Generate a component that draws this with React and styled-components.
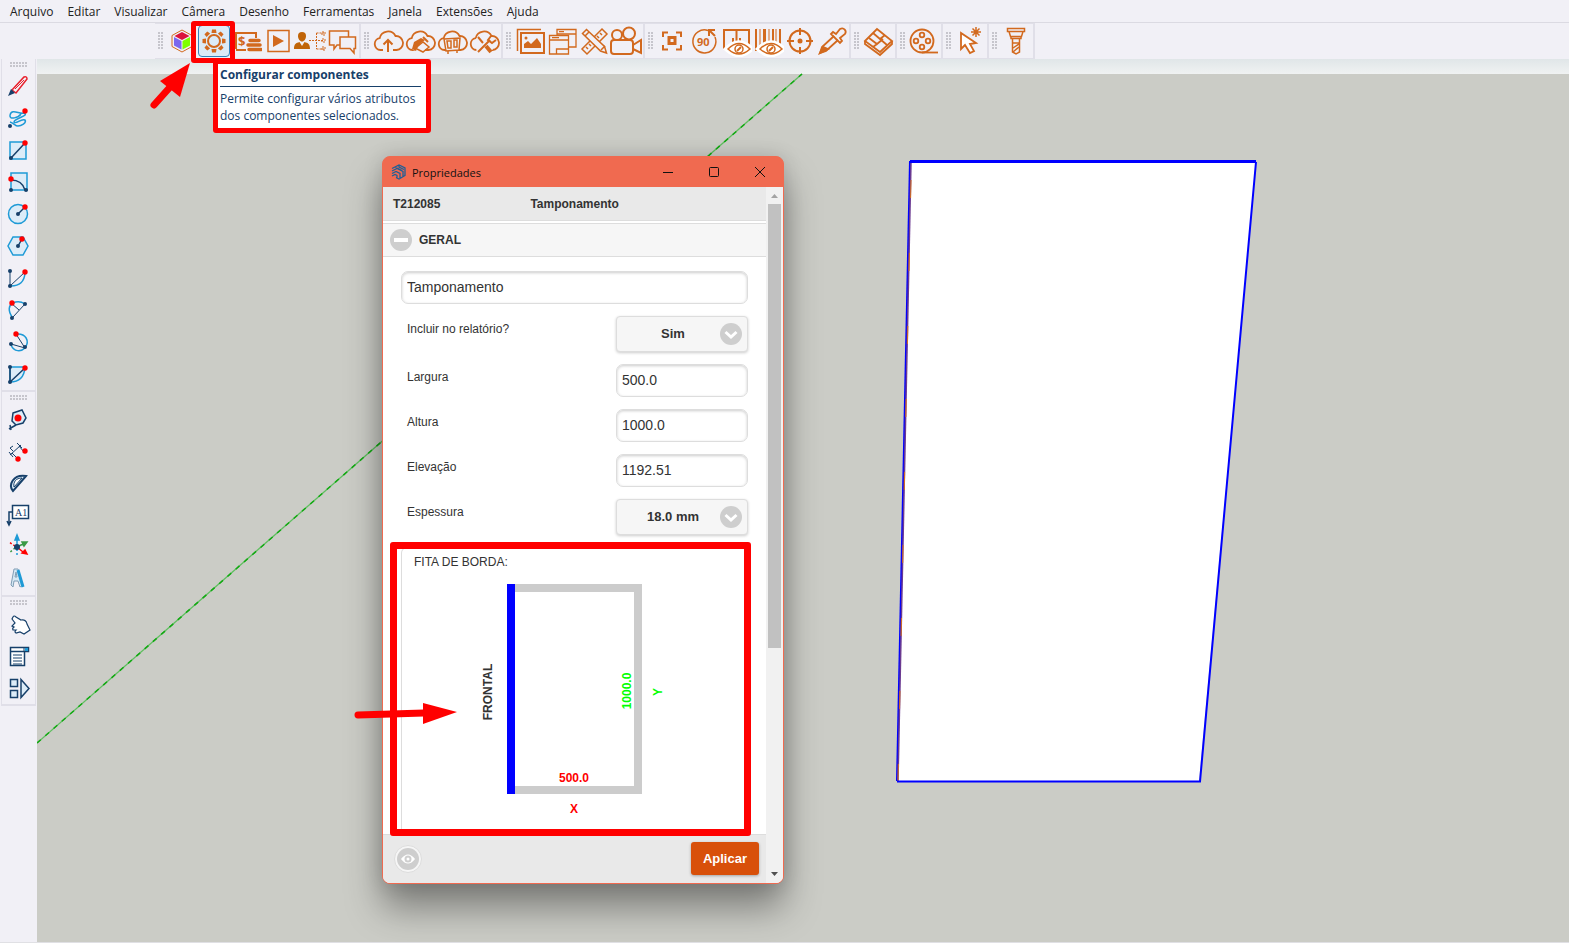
import React from 'react'
import styled, { createGlobalStyle } from 'styled-components';

const orange = '#d2691e';
const navy = '#17406a';
const blue = '#1e9ad6';
const pale = '#dcecf8';
const chrome = '#f1f0f6';


// ---- icons, all on a 32 x 32 grid ----

const Cloud = () => (
    <path d="M11 25H8.500a6 6 0 0 1-.8-11.900A8.500 8.500 0 0 1 23.500 11a7 7 0 0 1 1 14H21" strokeWidth="1.800" />
)

const Eye = () => (
    <g>
        <path d="M4 24q15-16 30 0q-15 15-30 0z" fill="#fff" stroke="#fff" />
        <path d="M8 24q11-11 22 0q-11 10-22 0z" fill="#fff" />
        <circle cx="19" cy="24" r="4" />
        <path d="M17 26l4-4" strokeWidth="2" />
    </g>
)

const topIcons = {
    cube: (
        <g strokeWidth="1">
            <path d="M16 5l10 5.500v11L16 27 6 21.500v-11z" />
            <path d="M16 7l7.500 4-7.500 4-7.500-4z" fill="#dc143c" stroke="none" />
            <path d="M8 12l7.500 4v8.500L8 20.500z" fill="#7b68ee" stroke="none" />
            <path d="M24 12l-7.500 4v8.500l7.500-4z" fill="#7fff00" stroke="none" />
        </g>
    ),
    gear: (
        <g>
            <circle cx="16" cy="16" r="6" strokeWidth="2" />
            {[0, 45, 90, 135, 180, 225, 270, 315].map((a) => (
                <path key={a} d="M14 4.500h4l.5 3.500h-5z" fill={orange} stroke="none" transform={`rotate(${a} 16 16)`} />
            ))}
        </g>
    ),
    budget: (
        <g>
            <path d="M4 8h22v5M6 8v16M6 25h10" strokeWidth="2" />
            <text x="8" y="21" fontSize="13" fontWeight="700" fill={orange} stroke="none">$</text>
            <path d="M20 15.500h9M18 20h12M19 24.500h12" strokeWidth="3.500" strokeLinecap="round" />
        </g>
    ),
    play: (
        <g>
            <rect x="6" y="5.500" width="21" height="21" />
            <path d="M11 10v12l11-6z" fill={orange} stroke="none" />
        </g>
    ),
    hierarchy: (
        <g>
            <g fill="#c06408" stroke="none">
                <path d="M8 7a4 4 0 0 1 4 4c0 3-2 5.500-4 5.500S4 14 4 11a4 4 0 0 1 4-4z" />
                <path d="M0 24c0-5 2-6 5.500-7L8 21l2.500-4c3.500 1 5.500 2 5.500 7z" />
            </g>
            <path d="M15 15.500h15M22.500 8v16M22.500 8H30M22.500 24H30" strokeDasharray="2 1" strokeWidth="1" />
            <path d="M28 7h3v3h-3zM28 14h3v3h-3zM28 22h3v3h-3z" strokeWidth="1" strokeDasharray="2 1" />
        </g>
    ),
    chat: (
        <g>
            <path d="M14 20h-3l-3 4v-4H3.500V6h19v6" />
            <path d="M14 12h15.500v11.500H28V28l-4-4.500H14z" />
        </g>
    ),
    cloudUp: <g><Cloud /><path d="M16 27V15M11.500 19.500L16 15l4.500 4.500" strokeWidth="2" /></g>,
    cloudHands: (
        <g>
            <Cloud />
            <path d="M6 18l10-6 9 7-7 9-9-3z" fill={chrome} stroke="none" />
            <path d="M8 24l2-7 7-4 4 2-4 3-3 4-2 4z" fill={orange} stroke="none" />
            <path d="M14 21l5-4 6 5-6 5-6-3" />
            <path d="M19 12l5 5" strokeWidth="2" />
        </g>
    ),
    cloudBoxes: (
        <g>
            <Cloud />
            <path d="M8 14l16-1-1 12-13 1z" fill={chrome} />
            <path d="M11 16h4v7h-3zM18 15h3v7h-3zM12 26v3M21 25v3" />
        </g>
    ),
    cloudTools: (
        <g>
            <Cloud />
            <path d="M10 12l13 14M23 14L10 27" stroke={chrome} strokeWidth="6" />
            <path d="M10 12l5 6M22 15L10 27" strokeWidth="2" />
            <path d="M18 21l5 6" strokeWidth="4" />
            <path d="M23 11l-3 4 4 3 4-3" strokeWidth="2" />
        </g>
    ),
    pictures: (
        <g>
            <path d="M3.500 26V4.500H27" />
            <rect x="7" y="8" width="23" height="20" strokeWidth="2" />
            <path d="M10 23v-4l4-3 3 3 6-6 4 6v4z" fill={orange} stroke="none" />
            <circle cx="12" cy="13" r="1.500" fill={orange} stroke="none" />
        </g>
    ),
    windows: (
        <g strokeWidth="1.300">
            <path d="M11 4.500h19V22H11zM11 9h19M13 6.700h5" />
            <path d="M3.500 10.500h19v18.500h-19z" fill={chrome} />
            <path d="M3.500 15h19M6 12.700h7M10.500 29v-5h12" />
        </g>
    ),
    rulers: (
        <g>
            <path d="M24 4l5 5L9 29l-5-5z" />
            <path d="M22 8l2 2M19 11l2 2M11 19l2 2M8 22l2 2" />
            <path d="M4.500 8.500l4-4 18 17 2 6.500-6-2z" fill={chrome} />
            <path d="M11 7l-4 4M23 25l4-4" />
        </g>
    ),
    camera: (
        <g strokeWidth="2">
            <circle cx="7" cy="10" r="5" />
            <circle cx="19" cy="8.500" r="6" />
            <rect x="1" y="15" width="22" height="14" rx="3" />
            <path d="M23 20l8-5v13l-8-4" />
        </g>
    ),
    focus: (
        <g strokeWidth="2">
            <path d="M7 12V7.500h5M20 7.500h5V12M25 20v4.500h-5M12 24.500H7V20" />
            <rect x="13" y="12.500" width="6" height="6" strokeWidth="3" />
        </g>
    ),
    rotate: (
        <g>
            <path d="M20 5.500A11.500 11.500 0 1 0 27 12" />
            <path d="M27 5h-6v6M21 5l6 6" strokeWidth="2" />
            <text x="9" y="21" fontSize="11" fontWeight="700" fill={orange} stroke="none">90</text>
        </g>
    ),
    hideDoors: (
        <g>
            <path d="M4 24V5h25v15M16.500 5v13M4 24h5M13 13v6M20 13v4" strokeWidth="2" />
            <Eye />
        </g>
    ),
    barcode: (
        <g>
            <path d="M4 4v22M21 4v14M28 4v16" strokeWidth="2" />
            <path d="M8 4v20M17 4v14M24 4v14" strokeWidth="1" />
            <path d="M12.500 4v18" strokeWidth="3" />
            <Eye />
        </g>
    ),
    target: (
        <g strokeWidth="2">
            <circle cx="16" cy="16" r="10.500" />
            <circle cx="16" cy="16" r="2.500" fill={orange} stroke="none" />
            <path d="M16 3v7M16 22v7M3 16h7M22 16h7" />
        </g>
    ),
    pipette: (
        <g strokeWidth="1.800">
            <path d="M18 11L6 22l-2 6 6-2 12-11" />
            <path d="M4 28l3-6 5 2z" fill={orange} />
            <path d="M15 9l2-2 3 2 4-5c4-2 7 2 5 5l-5 4 2 3-2 2z" />
        </g>
    ),
    boards: (
        <g strokeWidth="1.800">
            <path d="M15 4l15 12-12 11L3 16z" />
            <path d="M3 16v3l15 11 12-11v-3" />
            <path d="M11 8l14 12M18 14l5-4M7 13l8 6 6-5M15 19l-4 3" />
        </g>
    ),
    reel: (
        <g strokeWidth="1.800">
            <circle cx="14" cy="16" r="11.500" />
            <circle cx="14" cy="10" r="2.300" />
            <circle cx="14" cy="22" r="2.300" />
            <circle cx="8" cy="16" r="2.300" />
            <circle cx="20" cy="16" r="2.300" />
            <path d="M14 27.500h16" />
        </g>
    ),
    pointer: (
        <g strokeWidth="1.800">
            <path d="M7 8v16l4-4 5 8 4-2-4-7 6-1z" fill="#fff" />
            <path d="M22 2v10M17 7h10M18.500 3.500l7 7M25.500 3.500l-7 7" strokeWidth="1.500" />
        </g>
    ),
    screw: (
        <g>
            <path d="M7.500 3.500h17v3h-17zM9 6.500l1.500 5h11l1.500-5M11 11.500v2h10v-2M12.500 13.500v13.500l3.500 2 3.500-2V13.500" />
            <path d="M12.500 18h7M13 23l6-4M13 27l6-5" />
        </g>
    ),
};

const toolGroups = [
    ['cube', 'gear', 'budget', 'play', 'hierarchy', 'chat'],
    ['cloudUp', 'cloudHands', 'cloudBoxes', 'cloudTools'],
    ['pictures', 'windows', 'rulers', 'camera'],
    ['focus', 'rotate', 'hideDoors', 'barcode', 'target', 'pipette'],
    ['boards'],
    ['reel'],
    ['pointer'],
    ['screw'],
];

const Dot = ({x, y, red}) => (
    <circle cx={x} cy={y} r={red ? 2.7 : 2} fill={red ? '#f00' : navy} stroke="none" />
)

const sideIcons = {
    pencil: (
        <g>
            <path d="M10 20L22 7q3-1 3 2L14 23z" stroke="#e8202c" />
            <path d="M13 19l9-9" stroke="#e8202c" strokeWidth="1" />
            <path d="M6 26l3-7 4 4z" fill={navy} stroke="none" />
        </g>
    ),
    freehand: <g><path d="M8 13c2-7 10 0 14-2M8 13c-1 6 9 2 11-1M22 11c6 3-10 5-10 9c2 3 7-4 11-2c2 3-4 6-7 6s-4-3-8-4" /><Dot x={8} y={24} /><Dot x={23} y={9} red /></g>,
    rect: <g><rect x="8" y="8" width="16" height="17" fill={pale} /><path d="M9 24L23 9" stroke={navy} /><Dot x={9} y={24} /><Dot x={23} y={9} red /></g>,
    rotRect: <g><rect x="9" y="7" width="16" height="17" fill={pale} /><path d="M9 14q11 0 14 10" stroke={navy} /><Dot x={9} y={24} /><Dot x={24} y={24} /><Dot x={9} y={13} red /></g>,
    circle: <g><circle cx="16" cy="16" r="9.500" fill={pale} /><path d="M16 16l7-7" stroke={navy} /><Dot x={16} y={16} /><Dot x={23} y={9} red /></g>,
    polygon: <g><path d="M11 7h10l5 9-5 9H11l-5-9z" fill={pale} /><path d="M16 16l4-7" stroke={navy} /><Dot x={16} y={16} /><Dot x={20} y={9} red /></g>,
    arc: <g><path d="M23 11q-1 13-14 13" /><path d="M8 9v15L23 10" stroke={navy} strokeWidth="1" /><Dot x={8} y={9} /><Dot x={8} y={24} /><Dot x={23} y={10} red /></g>,
    arc2: <g><path d="M10 23q-6-10 1-14q6-3 12 1" /><path d="M11 23L23 10M9 9l8 7" stroke={navy} strokeWidth="1" /><Dot x={10} y={24} /><Dot x={23} y={10} /><Dot x={10} y={9} red /></g>,
    arc3: <g><path d="M14 8c10-1 14 7 9 14c-4 4-11 4-14-3" /><path d="M14 8l9 14-14-4" stroke={navy} strokeWidth="1" /><Dot x={9} y={18} /><Dot x={23} y={21} /><Dot x={14} y={8} red /></g>,
    pie: <g><path d="M8 9h15q-1 15-15 15z" fill={pale} /><path d="M8 9v15L23 10" stroke={navy} /><Dot x={8} y={9} /><Dot x={8} y={24} /><Dot x={23} y={10} red /></g>,
    tape: <g><path d="M11 10l9-3 4 8-3 5-7 2-4-4zM14 22l-7 4M8 22l1 5" fill={pale} stroke={navy} /><circle cx="16" cy="15" r="3.500" fill="#f00" stroke="none" /></g>,
    dimension: <g><path d="M8 20L19 10M7 17l4 5M15 8l5 5M11 11l-3 2 3 3M15 23l-5-5M22 17l-5-6" stroke={navy} strokeWidth="1" /><Dot x={23} y={16} red /><Dot x={16} y={24} red /></g>,
    protractor: <g><path d="M24 9l-13 15c-5-6 0-17 13-15z" fill={pale} stroke={navy} strokeWidth="2" /><path d="M20 11l-8 9c-1-5 2-9 8-9z" fill="#fff" stroke={navy} strokeWidth="1" /></g>,
    label: <g stroke={navy}><rect x="10.500" y="6.500" width="16" height="13" fill="#fff" /><path d="M10 13H7v12M5 22l2 4 2-4" /><text x="13" y="17" fontSize="10" fontFamily="Liberation Serif, serif" fill={navy} stroke="none">A1</text></g>,
    axes: <g><path d="M15 16V8M13 9l2-5 2 5z" fill={blue} /><path d="M15 16l6-3M20 11l5 0-3 4z" stroke="#3a9a46" fill="#3a9a46" /><path d="M15 16l6 5M20 22l5 1-2-4z" stroke="#f00" fill="#f00" /><path d="M15 18v7" strokeDasharray="2 2" /><path d="M13 15l-6-4" stroke="#f00" strokeDasharray="2 2" /><path d="M13 17l-6 5" stroke="#3a9a46" strokeDasharray="2 2" /><circle cx="15" cy="16" r="3" fill={navy} stroke="none" /></g>,
    text3d: <g><path d="M9 22l3-16h4l5 16-3 2-2-6h-4l-1 6zM13 14h2l-1-5z" fill="#d5e8f4" stroke="#7f9db5" strokeWidth="1" /><path d="M16 7l5 17" strokeWidth="3" /></g>,
    hand: <g><path d="M11 9q1-2 3 0l5 3q5-1 6 4l3 6-6 4-4-2-4 1q-2-1 0-3l-3 0q-1-2 1-3l-2-1 3-3-3-4z" fill="#fff" stroke={navy} strokeWidth="1.200" /></g>,
    list: <g stroke={navy}><path d="M8.500 7.500h18v4h-18zM8.500 11.500v14h14v-14" fill="#fff" /><path d="M22 7.500v4M11 15h9M11 18h9M11 21h9M11 24h9" strokeWidth="1" /><rect x="23" y="8" width="3" height="3" fill={blue} stroke="none" /></g>,
    shapes: <g stroke={navy} fill={pale}><rect x="8.500" y="7.500" width="7" height="7" /><rect x="8.500" y="18.500" width="7" height="7" /><path d="M19 7.500l8 9-8 9z" /></g>,
};

const sideGroups = [
    ['pencil', 'freehand', 'rect', 'rotRect', 'circle', 'polygon', 'arc', 'arc2', 'arc3', 'pie'],
    ['tape', 'dimension', 'protractor', 'label', 'axes', 'text3d'],
    ['hand', 'list', 'shapes'],
];

const menus = ['Arquivo', 'Editar', 'Visualizar', 'Câmera', 'Desenho', 'Ferramentas', 'Janela', 'Extensões', 'Ajuda'];


function ToolIcon({color, children}) {
    return (
        <svg width="32" height="32" viewBox="0 0 32 32" fill="none" stroke={color} strokeWidth="1.500" aria-hidden="true">
            {children}
        </svg>
    )
}

function TopTool({name}) {
    const active = name === 'gear';

    return (
        <Slot>
            <ToolButton $active={active} aria-label={name}>
                <ToolIcon color={orange}>{topIcons[name]}</ToolIcon>
            </ToolButton>
            {active && (
                <>
                    <ButtonMark />
                    <ButtonArrow width="50" height="60" viewBox="0 0 50 60" aria-hidden="true">
                        <path d="M8 45L25 26" stroke="#f00" strokeWidth="7" strokeLinecap="round" />
                        <path d="M44 3L14 21l20 16z" fill="#f00" />
                    </ButtonArrow>
                    <Tooltip role="tooltip">
                        <TooltipTitle>Configurar componentes</TooltipTitle>
                        <TooltipText>Permite configurar vários atributos<br />dos componentes selecionados.</TooltipText>
                    </Tooltip>
                </>
            )}
        </Slot>
    )
}

function TextField({id, label, value}) {
    return (
        <Row>
            <Label htmlFor={id}>{label}</Label>
            <Input id={id} defaultValue={value} />
        </Row>
    )
}

function SelectField({id, label, options}) {
    return (
        <Row>
            <Label htmlFor={id}>{label}</Label>
            <SelectBox>
                <Select id={id}>
                    {options.map((o) => <option key={o}>{o}</option>)}
                </Select>
                <Chevron width="22" height="22" viewBox="0 0 22 22" aria-hidden="true">
                    <circle cx="11" cy="11" r="11" fill="#cecece" />
                    <path d="M5.500 9l5.500 5 5.500-5" fill="none" stroke="#fff" strokeWidth="3" />
                </Chevron>
            </SelectBox>
        </Row>
    )
}

function EdgeDiagram() {
    return (
        <Diagram height="263" fontSize="12" fontWeight="700" textAnchor="middle">
            <path d="M113 17h123v202H113" fill="none" stroke="#ccc" strokeWidth="8" />
            <rect x="105" y="13" width="8" height="210" fill="#00f" />
            <text transform="translate(90 121) rotate(-90)" fill="#333">FRONTAL</text>
            <text transform="translate(229 120) rotate(-90)" fill="#0f0">1000.0</text>
            <text transform="translate(260 121) rotate(-90)" fill="#0f0">Y</text>
            <text x="172" y="211" fill="#f00">500.0</text>
            <text x="172" y="242" fill="#f00">X</text>
        </Diagram>
    )
}

function PropertiesWindow() {
    return (
        <Window>
            <TitleBar>
                <svg width="16" height="16" viewBox="0 0 16 16" fill="none" stroke="#1f5f96" strokeWidth="1.300" aria-hidden="true">
                    <path d="M1 4.500L8 1l6 3v7.500L8 15l-3-1.500M1 7l5-2.500 6 3v5M1 9.500l4-2 4 2V15M1 12l3-1.500 2 1V14M4 3l7 3.500M8 1v2l5 2.500" />
                </svg>
                <WindowName>Propriedades</WindowName>
                <Caption aria-label="Minimizar"><svg width="12" height="12"><path d="M1 6.500h10" /></svg></Caption>
                <Caption aria-label="Maximizar"><svg width="12" height="12"><rect x="1.500" y="1.500" width="9" height="9" rx="1" /></svg></Caption>
                <Caption aria-label="Fechar"><svg width="12" height="12"><path d="M1 1l10 10M11 1L1 11" /></svg></Caption>
            </TitleBar>
            <WindowBody>
                <Page>
                    <Header>
                        <span>T212085</span>
                        <HeaderName>Tamponamento</HeaderName>
                    </Header>
                    <Section>
                        <svg width="22" height="22" aria-hidden="true">
                            <circle cx="11" cy="11" r="11" fill="#cecece" />
                            <path d="M4 11h14" stroke="#fff" strokeWidth="4" />
                        </svg>
                        GERAL
                    </Section>
                    <Form>
                        <Input aria-label="Nome" defaultValue="Tamponamento" />
                        <SelectField id="relatorio" label="Incluir no relatório?" options={['Sim', 'Não']} />
                        <TextField id="largura" label="Largura" value="500.0" />
                        <TextField id="altura" label="Altura" value="1000.0" />
                        <TextField id="elevacao" label="Elevação" value="1192.51" />
                        <SelectField id="espessura" label="Espessura" options={['18.0 mm']} />
                        <EdgeBox>
                            <EdgeTitle>FITA DE BORDA:</EdgeTitle>
                            <EdgeDiagram />
                        </EdgeBox>
                    </Form>
                    <Footer>
                        <RoundButton aria-label="Visualizar">
                            <svg width="22" height="22" aria-hidden="true">
                                <circle cx="11" cy="11" r="11" fill="#cecece" />
                                <path d="M4 11q7-9 14 0q-7 9-14 0z" fill="#fff" />
                                <circle cx="11" cy="11" r="2.500" fill="#fff" stroke="#cecece" strokeWidth="2" />
                            </svg>
                        </RoundButton>
                        <ApplyButton>Aplicar</ApplyButton>
                    </Footer>
                </Page>
                <Scrollbar>
                    <svg width="9" height="17" aria-hidden="true"><path d="M1 11h7L4.500 7z" fill="#a3a3a3" /></svg>
                    <Track><Thumb /></Track>
                    <svg width="9" height="17" aria-hidden="true"><path d="M1 6h7L4.500 10z" fill="#505050" /></svg>
                </Scrollbar>
            </WindowBody>
            <PanelMark />
            <PanelArrow width="106" height="26" viewBox="0 0 106 26" aria-hidden="true">
                <path d="M6 15l66-2" stroke="#f00" strokeWidth="7" strokeLinecap="round" />
                <path d="M71 3l34 9-34 12z" fill="#f00" />
            </PanelArrow>
        </Window>
    )
}

function App() {
    return (
        <Shell>
            <GlobalStyle />
            <MenuBar>
                {menus.map((m) => <MenuItem key={m}>{m}</MenuItem>)}
            </MenuBar>
            <Toolbar>
                {toolGroups.map((group) => (
                    <ToolGroup key={group[0]}>
                        <Grip />
                        {group.map((name) => <TopTool key={name} name={name} />)}
                    </ToolGroup>
                ))}
            </Toolbar>
            <Workspace>
                <Sidebar>
                    {sideGroups.map((group) => (
                        <SideGroup key={group[0]}>
                            <Grip $wide />
                            {group.map((name) => (
                                <ToolButton key={name} aria-label={name}>
                                    <ToolIcon color={blue}>{sideIcons[name]}</ToolIcon>
                                </ToolButton>
                            ))}
                        </SideGroup>
                    ))}
                </Sidebar>
                <Viewport>
                    <Scene aria-hidden="true">
                        <path d="M0 684L765 15" stroke="#5fbf5f" strokeWidth="1.300" />
                        <path d="M0 684L765 15" stroke="#12a812" strokeWidth="1.500" strokeDasharray="5 6" />
                        <path d="M873 103h346l-57 619H860z" fill="#fff" />
                        <path d="M873 102L860 722" stroke="#00f" strokeWidth="2" />
                        <path d="M874 103L861 722" stroke="#6b3a90" strokeWidth="1.500" />
                        <path d="M874 121L861 722" stroke="#d8701c" strokeWidth="1" strokeDasharray="18 55" />
                        <path d="M873 102.500h346" stroke="#00f" strokeWidth="3" />
                        <path d="M1219 103l-56 619.500H860" fill="none" stroke="#00f" strokeWidth="2" />
                    </Scene>
                    <PropertiesWindow />
                </Viewport>
            </Workspace>
        </Shell>
    )
}
export default App

const GlobalStyle = createGlobalStyle`
    * {
        box-sizing: border-box;
    }
    body {
        margin: 0;
        font-family: "Open Sans", "Noto Sans", sans-serif;
        font-size: 12px;
    }
    button, input, select {
        font: inherit;
        color: inherit;
    }
    svg {
        display: block;
        flex: none;
    }
`;

const Shell = styled.div`
    display: flex;
    flex-direction: column;
    min-height: 100vh;
    background-color: ${chrome};
    border-bottom: 1px solid #e0e0e4;
`;
const MenuBar = styled.nav`
    display: flex;
    height: 23px;
    padding: 0 3px;
    border-bottom: 1px solid #dbdae2;
`;
const MenuItem = styled.button`
    padding: 1px 7px 0;
    border: 0;
    background: none;
    color: #222;
    line-height: 22px;
`;
const Toolbar = styled.div`
    display: flex;
    height: 36px;
    padding-left: 155px;
`;
const ToolGroup = styled.div`
    display: flex;
    align-items: center;
    padding: 0 1px;
    border: 1px solid #e0dfe8;
    border-left-width: 0;
    border-right-width: 2px;
`;
const Grip = styled.span`
    flex: none;
    align-self: center;
    width: ${(p) => (p.$wide ? 18 : 6)}px;
    height: ${(p) => (p.$wide ? 6 : 18)}px;
    margin: ${(p) => (p.$wide ? '3px 0 2px' : '0 2px')};
    background-image: radial-gradient(circle at 1px 1px, #c6c5cc 1px, transparent 1px);
    background-size: 3px 3px;
`;
const Slot = styled.div`
    position: relative;
`;
const ToolButton = styled.button`
    display: flex;
    align-items: center;
    justify-content: center;
    width: 32px;
    height: 32px;
    padding: 0;
    border: 1px solid ${(p) => (p.$active ? '#3484bc' : 'transparent')};
    border-radius: 4px;
    background: ${(p) => (p.$active ? '#dcebf7' : 'none')};
`;
const ButtonMark = styled.div`
    position: absolute;
    z-index: 2;
    inset: -4px -5px -6px -7px;
    border: 5px solid #f00;
    border-radius: 3px;
`;
const ButtonArrow = styled.svg`
    position: absolute;
    z-index: 2;
    top: 35px;
    left: -52px;
`;
const Tooltip = styled.div`
    position: absolute;
    z-index: 3;
    top: 34px;
    left: 15px;
    width: 218px;
    padding: 2px 5px 4px 2px;
    border: 5px solid #f00;
    border-radius: 3px;
    background-color: #fff;
    color: ${navy};
    white-space: nowrap;
`;
const TooltipTitle = styled.div`
    padding-bottom: 2px;
    border-bottom: 1px solid ${navy};
    font-weight: 700;
    line-height: 18px;
`;
const TooltipText = styled.div`
    padding-top: 3px;
    line-height: 17px;
`;

const Workspace = styled.div`
    display: flex;
    flex: 1;
`;
const Sidebar = styled.div`
    width: 37px;
    padding: 0 1px;
`;
const SideGroup = styled.div`
    display: flex;
    flex-direction: column;
    border: 1px solid #e0dfe8;
    border-top-width: 0;
    border-bottom-width: 2px;
`;
const Viewport = styled.main`
    position: relative;
    flex: 1;
    overflow: hidden;
    background: linear-gradient(#e0e6e8, #f0f2f2 15px, #cbccc6 15px);
`;
const Scene = styled.svg`
    position: absolute;
    width: 100%;
    height: 100%;
`;

const Window = styled.section`
    position: absolute;
    top: 97px;
    left: 345px;
    width: 402px;
    border: 1px solid #f06a50;
    border-radius: 8px;
    background-color: #f06a50;
    box-shadow: 0 24px 36px rgba(0, 0, 0, 0.38), 0 0 20px rgba(0, 0, 0, 0.14);
    font-family: "Liberation Sans", Arial, sans-serif;
    color: #333;
`;
const TitleBar = styled.div`
    display: flex;
    align-items: center;
    height: 30px;
    padding-left: 8px;
`;
const WindowName = styled.h1`
    flex: 1;
    margin: 0 0 0 5px;
    color: #111;
    font-family: "Open Sans", "Noto Sans", sans-serif;
    font-size: 11px;
    font-weight: 400;
`;
const Caption = styled.button`
    display: flex;
    justify-content: center;
    width: 46px;
    padding: 0;
    border: 0;
    background: none;

    svg {
        fill: none;
        stroke: #111;
    }
`;
const WindowBody = styled.div`
    display: flex;
    overflow: hidden;
    border-radius: 0 0 7px 7px;
    background-color: #fff;
`;
const Page = styled.div`
    flex: 1;
`;
const Header = styled.header`
    display: flex;
    align-items: center;
    height: 34px;
    padding: 0 10px;
    border-bottom: 1px solid #ddd;
    background-color: #e9e9e9;
    font-weight: 700;
`;
const HeaderName = styled.span`
    flex: 1;
    margin-left: 90px;
`;
const Section = styled.h2`
    display: flex;
    align-items: center;
    gap: 7px;
    height: 34px;
    margin: 2px 0 0;
    padding: 0 7px;
    border: solid #ddd;
    border-width: 1px 0;
    background-color: #f6f6f6;
    font-size: 12px;
`;
const Form = styled.div`
    display: flex;
    flex-direction: column;
    gap: 12px;
    padding: 14px 18px 0;
`;
const Row = styled.div`
    display: grid;
    grid-template-columns: 1fr 132px;
    padding-left: 6px;
`;
const Label = styled.label`
    padding-top: 5px;
    line-height: 16px;
`;
const Input = styled.input`
    width: 100%;
    height: 33px;
    padding: 0 5px 1px;
    border: 1px solid #ddd;
    border-radius: 7px;
    background-color: #fff;
    box-shadow: inset 0 1px 3px rgba(0, 0, 0, 0.2);
    font-size: 14px;
`;
const SelectBox = styled.div`
    position: relative;
`;
const Select = styled.select`
    appearance: none;
    display: block;
    width: 100%;
    height: 36px;
    padding: 0 35px 2px 17px;
    border: 1px solid #ddd;
    border-radius: 4px;
    background-color: #f6f6f6;
    box-shadow: 0 1px 3px rgba(0, 0, 0, 0.2);
    font-size: 13px;
    font-weight: 700;
    text-align: center;
    text-align-last: center;
`;
const Chevron = styled.svg`
    position: absolute;
    top: 7px;
    right: 6px;
    pointer-events: none;
`;
const EdgeBox = styled.div`
    border: 1px solid #ddd;
    border-bottom: 0;
    border-radius: 6px 6px 0 0;
`;
const EdgeTitle = styled.div`
    padding: 5px 12px 0;
    line-height: 18px;
`;
const Diagram = styled.svg`
    width: 100%;
`;
const Footer = styled.footer`
    display: flex;
    align-items: center;
    justify-content: space-between;
    height: 49px;
    padding: 0 7px 1px 11px;
    border-top: 1px solid #ddd;
    background-color: #e9e9e9;
`;
const RoundButton = styled.button`
    padding: 2px;
    border: 1px solid #ddd;
    border-radius: 50%;
    background-color: #f6f6f6;
`;
const ApplyButton = styled.button`
    height: 33px;
    padding: 0 12px;
    border: 0;
    border-radius: 3px;
    background-color: #d8500a;
    box-shadow: 0 1px 3px rgba(0, 0, 0, 0.3);
    color: #fff;
    font-size: 13px;
    font-weight: 700;
`;
const Scrollbar = styled.div`
    display: flex;
    flex-direction: column;
    align-items: center;
    width: 17px;
    background-color: #f1f1f1;
`;
const Track = styled.div`
    flex: 1;
    width: 13px;
`;
const Thumb = styled.div`
    height: 67%;
    background-color: #c1c1c1;
`;
const PanelMark = styled.div`
    position: absolute;
    top: 385px;
    left: 7px;
    right: 32px;
    bottom: 47px;
    border: 7px solid #f00;
    border-radius: 3px;
`;
const PanelArrow = styled.svg`
    position: absolute;
    top: 543px;
    left: -31px;
`;
